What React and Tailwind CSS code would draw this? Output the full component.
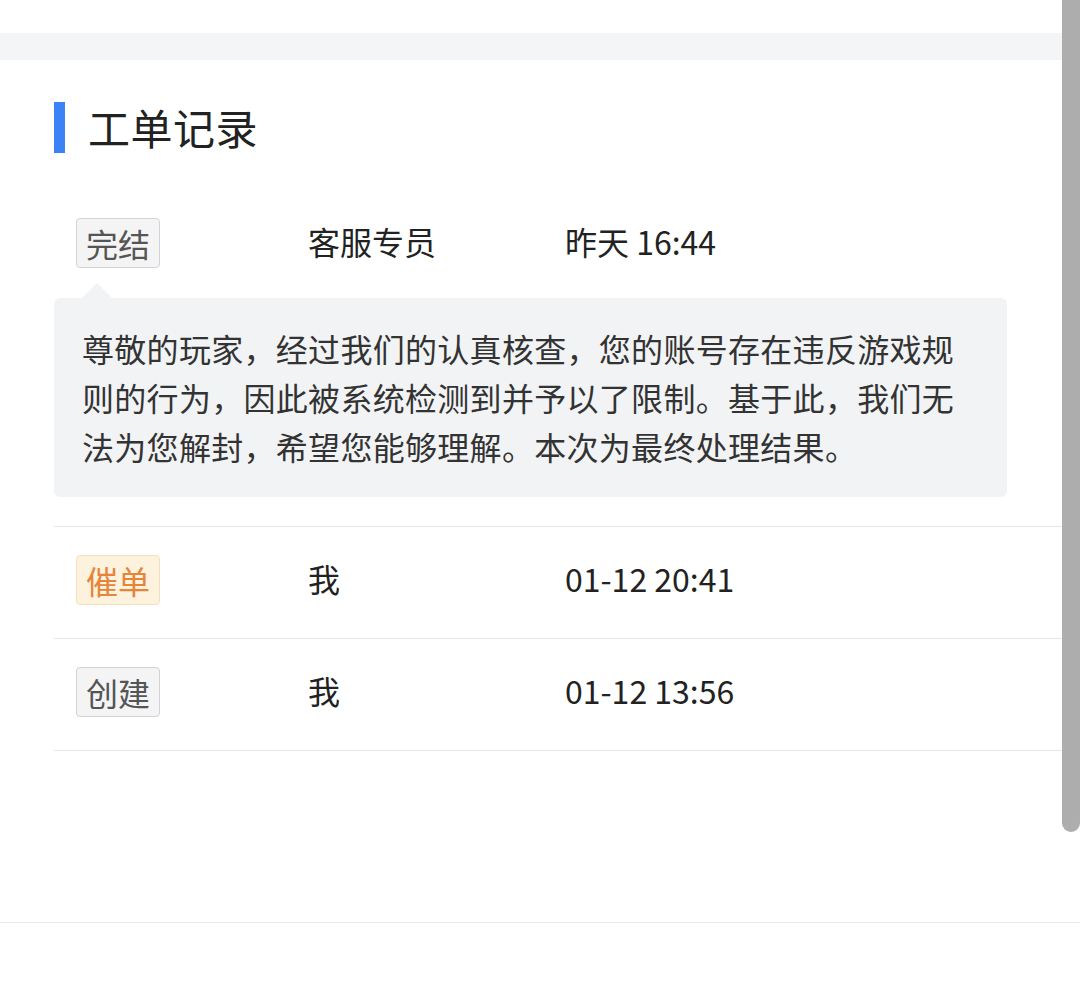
import React from 'react';

const records = [
  {
    tag: '完结',
    tone: 'gray',
    who: '客服专员',
    time: '昨天 16:44',
    reply:
      '尊敬的玩家，经过我们的认真核查，您的账号存在违反游戏规则的行为，因此被系统检测到并予以了限制。基于此，我们无法为您解封，希望您能够理解。本次为最终处理结果。',
  },
  { tag: '催单', tone: 'orange', who: '我', time: '01-12 20:41' },
  { tag: '创建', tone: 'gray', who: '我', time: '01-12 13:56' },
];

function Tag({ tone, children }) {
  const cls =
    tone === 'orange'
      ? 'bg-[#fdf2de] border-[#f8e0b6] text-[#e4853a]'
      : 'bg-[#f4f4f5] border-[#d3d3d6] text-[#555555]';
  return (
    <span className={`inline-block border rounded-[4px] px-[9px] text-[32px] leading-[48px] ${cls}`}>
      {children}
    </span>
  );
}

function RecordRow({ record, first }) {
  return (
    <div className={`border-b border-[#e6e6e8] ${first ? 'pb-[29px]' : 'pt-[28px] pb-[33px]'}`}>
      <div className="flex items-center h-[50px] pl-[22px] text-[32px] leading-[46px] text-[#222222]">
        <div className="w-[232px] shrink-0">
          <Tag tone={record.tone}>{record.tag}</Tag>
        </div>
        <div className="w-[257px] shrink-0 pb-[4px]">{record.who}</div>
        <div className="pb-[4px]">{record.time}</div>
      </div>
      {record.reply && (
        <div className="mr-[73px]">
          <div className="mt-[15px] ml-[28px] w-0 h-0 border-l-[15px] border-r-[15px] border-b-[15px] border-l-transparent border-r-transparent border-b-[#f2f3f5]" />
          <div className="bg-[#f2f3f5] rounded-[6px] pl-[28px] pr-[40px] pt-[26px] pb-[26px] text-[32px] leading-[49px] tracking-[0.3px] text-[#333333]">
            {record.reply}
          </div>
        </div>
      )}
    </div>
  );
}

export default function App() {
  return (
    <div
      className="relative w-[1080px] h-[1004px] bg-white overflow-hidden"
      style={{ fontFamily: '"Noto Sans CJK SC", "Noto Sans", sans-serif' }}
    >
      <div className="h-[33px]" />
      <div className="h-[27px] bg-[#f4f5f7]" />

      <div className="pl-[54px]">
        <div className="flex items-center h-[51px] mt-[42px]">
          <div className="w-[11px] h-[51px] bg-[#3b82f6]" />
          <h2 className="ml-[23px] text-[42px] leading-[51px] tracking-[0.5px] text-[#222222] pb-[2px]">工单记录</h2>
        </div>

        <div className="mt-[65px]">
          {records.map((r, i) => (
            <RecordRow key={r.tag} record={r} first={i === 0} />
          ))}
        </div>
      </div>

      <div className="mt-[171px] border-b border-[#e8e8ea]" />

      {/* scrollbar overlay */}
      <div className="absolute top-0 right-0 w-[18px] h-[832px] bg-[#adadad] rounded-b-full" />
    </div>
  );
}
